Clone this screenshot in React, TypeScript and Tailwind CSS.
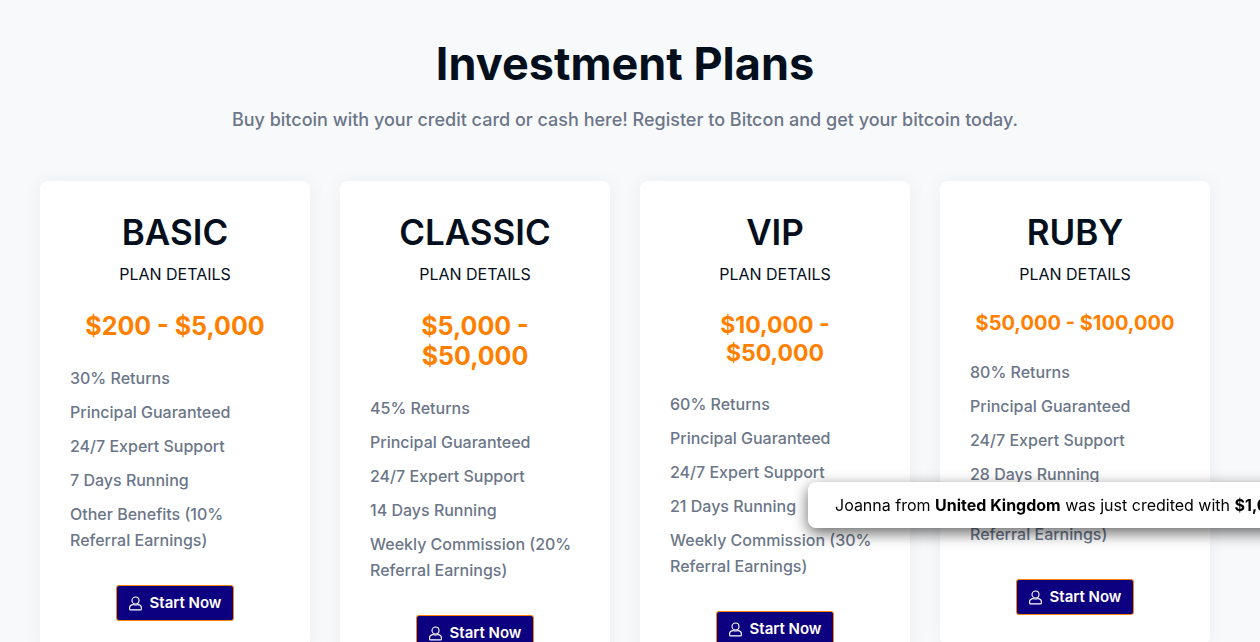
interface Plan {
  name: string;
  price: string;
  priceClassName: string;
  features: string[];
}

const PLANS: Plan[] = [
  {
    name: "BASIC",
    price: "$200 - $5,000",
    priceClassName: "text-[25px] leading-[30px]",
    features: [
      "30% Returns",
      "Principal Guaranteed",
      "24/7 Expert Support",
      "7 Days Running",
      "Other Benefits (10% Referral Earnings)",
    ],
  },
  {
    name: "CLASSIC",
    price: "$5,000 - $50,000",
    priceClassName: "text-[25px] leading-[30px]",
    features: [
      "45% Returns",
      "Principal Guaranteed",
      "24/7 Expert Support",
      "14 Days Running",
      "Weekly Commission (20% Referral Earnings)",
    ],
  },
  {
    name: "VIP",
    price: "$10,000 - $50,000",
    priceClassName: "text-[23px] leading-[28px]",
    features: [
      "60% Returns",
      "Principal Guaranteed",
      "24/7 Expert Support",
      "21 Days Running",
      "Weekly Commission (30% Referral Earnings)",
    ],
  },
  {
    name: "RUBY",
    price: "$50,000 - $100,000",
    priceClassName: "text-[20px] leading-[24px]",
    features: [
      "80% Returns",
      "Principal Guaranteed",
      "24/7 Expert Support",
      "28 Days Running",
      "Weekly Commission (50% Referral Earnings)",
    ],
  },
];

export default function App() {
  return (
    <div className="min-h-screen overflow-x-hidden bg-[#f8f9fb] font-['Inter',sans-serif] text-[#6b7688]">
      <section className="pt-9 pr-[50px] pb-20 pl-10">
        <header className="mb-[49px] text-center">
          <h2 className="mb-4 text-[45px] leading-[56px] font-bold text-[#030f1c]">
            Investment Plans
          </h2>
          <p className="text-lg leading-6 font-medium">
            Buy bitcoin with your credit card or cash here! Register to Bitcon and get your bitcoin
            today.
          </p>
        </header>

        <div className="grid grid-cols-1 items-start gap-[30px] sm:grid-cols-2 lg:grid-cols-4">
          {PLANS.map((plan) => (
            <PlanCard key={plan.name} plan={plan} />
          ))}
        </div>
      </section>

      <CreditToast name="Joanna" country="United Kingdom" amount="$1,000" />
    </div>
  );
}

function PlanCard({ plan }: { plan: Plan }) {
  return (
    <article className="rounded-lg bg-white px-[30px] pt-[30px] pb-[30px] shadow-[0_0_20px_rgba(0,0,0,0.05)]">
      <div className="text-center">
        <h3 className="text-[35px] leading-[42px] font-semibold text-[#030f1c]">{plan.name}</h3>
        <p className="mt-[9px] text-base leading-6 text-[#030f1c]">PLAN DETAILS</p>
        <p className={`mt-[25px] font-bold text-[#ff7f00] ${plan.priceClassName}`}>{plan.price}</p>
      </div>

      <ul className="mt-6 flex flex-col gap-2">
        {plan.features.map((feature) => (
          <li key={feature} className="text-base leading-[26px] font-medium">
            {feature}
          </li>
        ))}
      </ul>

      <div className="mt-8 flex justify-center">
        <a
          href="#register"
          className="flex h-9 items-center gap-2 rounded-[3px] border border-[#ff7f00] bg-[#0d0080] px-3 text-[15px] font-semibold text-white"
        >
          <UserIcon />
          Start Now
        </a>
      </div>
    </article>
  );
}

interface CreditToastProps {
  name: string;
  country: string;
  amount: string;
}

function CreditToast({ name, country, amount }: CreditToastProps) {
  return (
    <div
      role="status"
      className="fixed bottom-[114px] left-[808px] rounded-lg bg-white px-[27px] py-[11px] text-base leading-6 whitespace-nowrap text-black shadow-[0_5px_15px_rgba(0,0,0,0.6)]"
    >
      {name} from <b className="font-bold">{country}</b> was just credited with{" "}
      <b className="font-bold">{amount}</b>
    </div>
  );
}

function UserIcon() {
  return (
    <svg
      width="13"
      height="15"
      viewBox="0 0 13 15"
      fill="none"
      stroke="currentColor"
      strokeWidth="1.1"
      strokeLinejoin="round"
      aria-hidden="true"
    >
      <circle cx="6.5" cy="4.5" r="3.5" />
      <path d="M3.7 8.6C1.8 8.8.6 10.200.6 11.900v1c0 .6.4 1 1 1h9.800c.6 0 1-.4 1-1v-1c0-1.700-1.200-3.100-3.100-3.300C8.500 8.600 7.800 9 6.500 9S4.500 8.600 3.700 8.600z" />
    </svg>
  );
}
